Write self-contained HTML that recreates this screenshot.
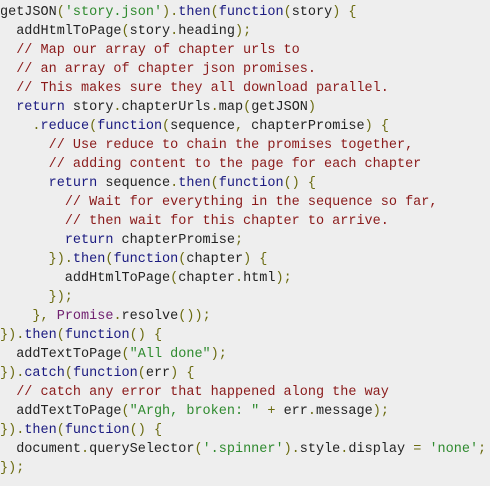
<!DOCTYPE html>
<html><head><meta charset="utf-8"><style>
html,body{margin:0;padding:0;background:#eeeeee;width:490px;height:486px;overflow:hidden}
pre{margin:0;padding:3px 0 0 0;font-family:"Liberation Mono",monospace;font-size:13.5px;line-height:19px;color:#222}
.k{color:#1a1a80}.p{color:#6b6b10}.s{color:#2e8a2e}.c{color:#8a1a1a}.t{color:#702070}
</style></head><body><pre>getJSON<span class="p">(</span><span class="s">'story.json'</span><span class="p">).</span><span class="k">then</span><span class="p">(</span><span class="k">function</span><span class="p">(</span>story<span class="p">)</span> <span class="p">{</span>
  addHtmlToPage<span class="p">(</span>story<span class="p">.</span>heading<span class="p">);</span>
  <span class="c">// Map our array of chapter urls to</span>
  <span class="c">// an array of chapter json promises.</span>
  <span class="c">// This makes sure they all download parallel.</span>
  <span class="k">return</span> story<span class="p">.</span>chapterUrls<span class="p">.</span>map<span class="p">(</span>getJSON<span class="p">)</span>
    <span class="p">.</span><span class="k">reduce</span><span class="p">(</span><span class="k">function</span><span class="p">(</span>sequence<span class="p">,</span> chapterPromise<span class="p">)</span> <span class="p">{</span>
      <span class="c">// Use reduce to chain the promises together,</span>
      <span class="c">// adding content to the page for each chapter</span>
      <span class="k">return</span> sequence<span class="p">.</span><span class="k">then</span><span class="p">(</span><span class="k">function</span><span class="p">()</span> <span class="p">{</span>
        <span class="c">// Wait for everything in the sequence so far,</span>
        <span class="c">// then wait for this chapter to arrive.</span>
        <span class="k">return</span> chapterPromise<span class="p">;</span>
      <span class="p">}).</span><span class="k">then</span><span class="p">(</span><span class="k">function</span><span class="p">(</span>chapter<span class="p">)</span> <span class="p">{</span>
        addHtmlToPage<span class="p">(</span>chapter<span class="p">.</span>html<span class="p">);</span>
      <span class="p">});</span>
    <span class="p">},</span> <span class="t">Promise</span><span class="p">.</span>resolve<span class="p">());</span>
<span class="p">}).</span><span class="k">then</span><span class="p">(</span><span class="k">function</span><span class="p">()</span> <span class="p">{</span>
  addTextToPage<span class="p">(</span><span class="s">"All done"</span><span class="p">);</span>
<span class="p">}).</span><span class="k">catch</span><span class="p">(</span><span class="k">function</span><span class="p">(</span>err<span class="p">)</span> <span class="p">{</span>
  <span class="c">// catch any error that happened along the way</span>
  addTextToPage<span class="p">(</span><span class="s">"Argh, broken: "</span> <span class="p">+</span> err<span class="p">.</span>message<span class="p">);</span>
<span class="p">}).</span><span class="k">then</span><span class="p">(</span><span class="k">function</span><span class="p">()</span> <span class="p">{</span>
  document<span class="p">.</span>querySelector<span class="p">(</span><span class="s">'.spinner'</span><span class="p">).</span>style<span class="p">.</span>display <span class="p">=</span> <span class="s">'none'</span><span class="p">;</span>
<span class="p">});</span></pre></body></html>
